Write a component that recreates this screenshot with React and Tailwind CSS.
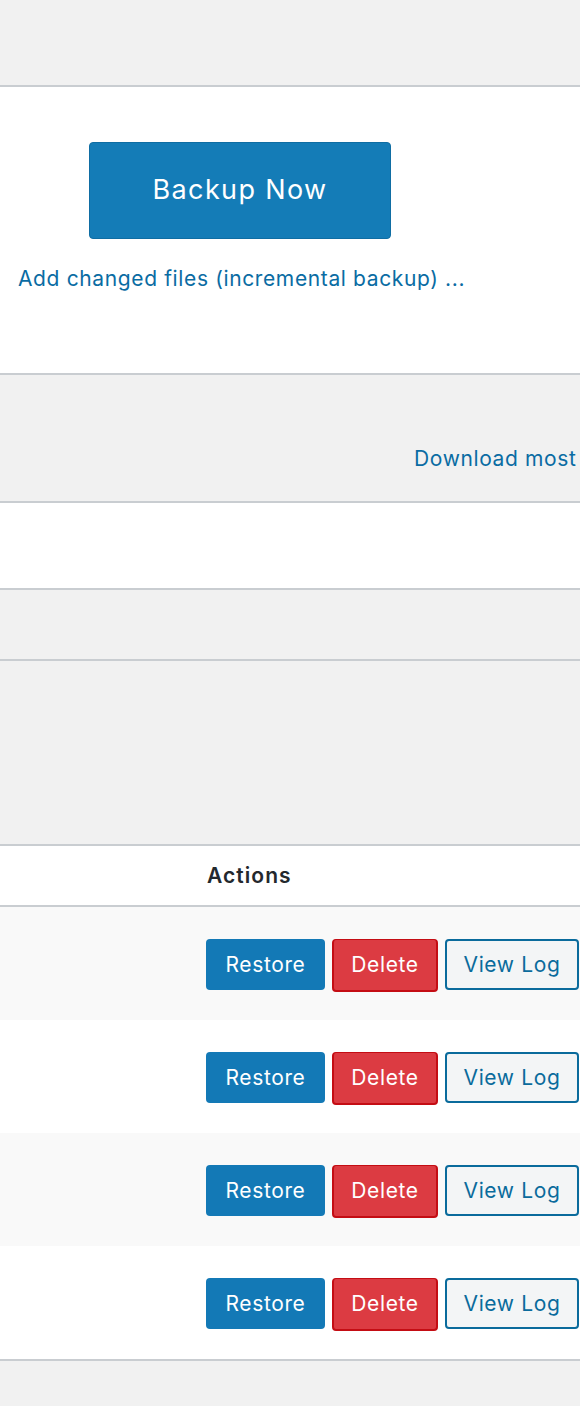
const rows = [
  { id: 1, bg: 'bg-[#f9f9f9]' },
  { id: 2, bg: 'bg-white' },
  { id: 3, bg: 'bg-[#f9f9f9]' },
  { id: 4, bg: 'bg-white' },
];

function RowActions() {
  return (
    <div className="flex items-start gap-[7px] pl-[206px] pt-[32px] text-[21px] tracking-[0.03em]">
      <button className="h-[51px] w-[119px] rounded-[4px] bg-[#1379b6] text-white">
        Restore
      </button>
      <button className="h-[53px] w-[106px] rounded-[4px] border-2 border-t border-[#c40d14] bg-[#dc3b42] text-white">
        Delete
      </button>
      <button className="h-[51px] w-[134px] rounded-[4px] border-2 border-[#0a6b9c] bg-[#f3f5f6] text-[#0a6b9c]">
        View Log
      </button>
    </div>
  );
}

export default function App() {
  return (
    <div className="w-[580px] h-[1406px] overflow-hidden bg-[#f1f1f1] font-['Inter','Noto_Sans',sans-serif]">
      <div className="h-[85px] bg-[#f1f1f1]" />

      {/* backup now */}
      <div className="h-[290px] border-y-2 border-[#c9cdd1] bg-white">
        <div className="pl-[89px] pt-[55px]">
          <button className="h-[97px] w-[302px] rounded-[4px] border border-[#0f6da3] bg-[#147cb7] text-[27px] tracking-[0.05em] text-white">
            Backup Now
          </button>
        </div>
        <a className="mt-[24px] ml-[18px] block text-[21px] tracking-[0.03em] text-[#0a6ca3]">
          Add changed files (incremental backup) ...
        </a>
      </div>

      {/* log download */}
      <div className="h-[128px] border-b-2 border-[#c9cdd1] bg-[#f1f1f1]">
        <a className="block whitespace-nowrap pl-[414px] pt-[68px] text-[21px] tracking-[0.03em] text-[#0a6ca3]">
          Download most recently modified log file
        </a>
      </div>

      <div className="h-[87px] border-b-2 border-[#c9cdd1] bg-white" />
      <div className="h-[71px] border-b-2 border-[#c9cdd1] bg-[#f1f1f1]" />
      <div className="h-[185px] border-b-2 border-[#c9cdd1] bg-[#f1f1f1]" />

      {/* existing backups table */}
      <div className="flex h-[61px] items-center border-b-2 border-[#c9cdd1] bg-white pl-[207px]">
        <span className="text-[21px] font-semibold tracking-[0.05em] text-[#23282d]">Actions</span>
      </div>
      {rows.map((r) => (
        <div key={r.id} className={`h-[113px] ${r.bg}`}>
          <RowActions />
        </div>
      ))}
      <div className="h-[2px] bg-[#c9cdd1]" />
      <div className="h-[45px] bg-[#f1f1f1]" />
    </div>
  );
}
